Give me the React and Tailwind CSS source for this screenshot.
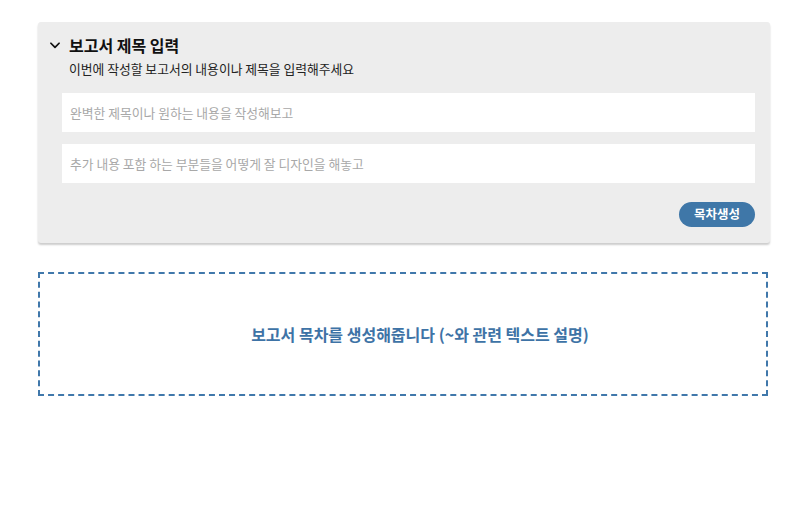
import React, { useState } from "react"

function App() {
    const [title, setTitle] = useState("")
    const [detail, setDetail] = useState("")

    return (
        <div className="w-full min-h-screen bg-white pt-[22px] px-[38px]" style={{ fontFamily: '"Noto Sans CJK KR", "Noto Sans", sans-serif' }}>
            <div className="w-[732px] bg-[#ededed] rounded-[3px] shadow-[0_2px_2px_rgba(0,0,0,0.2)] pt-[11px] pb-[16px] pr-[15px]">
                <div className="flex items-center pl-[10px]">
                    <svg width="14" height="14" viewBox="0 0 24 24" fill="none" stroke="#111" strokeWidth="3" strokeLinecap="round" strokeLinejoin="round">
                        <path d="M5 9l7 7 7-7" />
                    </svg>
                    <div className="ml-[7px] text-[16px] font-bold text-[#111] leading-[24px]">보고서 제목 입력</div>
                </div>
                <div className="pl-[31px] mt-[3px] text-[12.8px] text-[#222] leading-[18px]">이번에 작성할 보고서의 내용이나 제목을 입력해주세요</div>
                <div className="pl-[24px] mt-[15px] flex flex-col gap-[12px]">
                    <input value={title} onChange={(e) => { setTitle(e.target.value) }} placeholder="완벽한 제목이나 원하는 내용을 작성해보고" className="w-full h-[39px] bg-white px-[8px] text-[12.8px] outline-none placeholder:text-[#a8a8a8]" />
                    <input value={detail} onChange={(e) => { setDetail(e.target.value) }} placeholder="추가 내용 포함 하는 부분들을 어떻게 잘 디자인을 해놓고" className="w-full h-[39px] bg-white px-[8px] text-[12.8px] outline-none placeholder:text-[#a8a8a8]" />
                </div>
                <div className="flex justify-end mt-[19px]">
                    <button className="h-[25px] w-[76px] rounded-full bg-[#3f77a8] text-white text-[12.5px] font-bold">목차생성</button>
                </div>
            </div>

            <div className="w-[730px] h-[124px] mt-[29px] pl-[34px] border-2 border-dashed border-[#4078ab] flex items-center justify-center">
                <div className="text-[16px] font-bold text-[#3e73a6]">보고서 목차를 생성해줍니다 (~와 관련 텍스트 설명)</div>
            </div>
        </div>
    )
}

export default App
